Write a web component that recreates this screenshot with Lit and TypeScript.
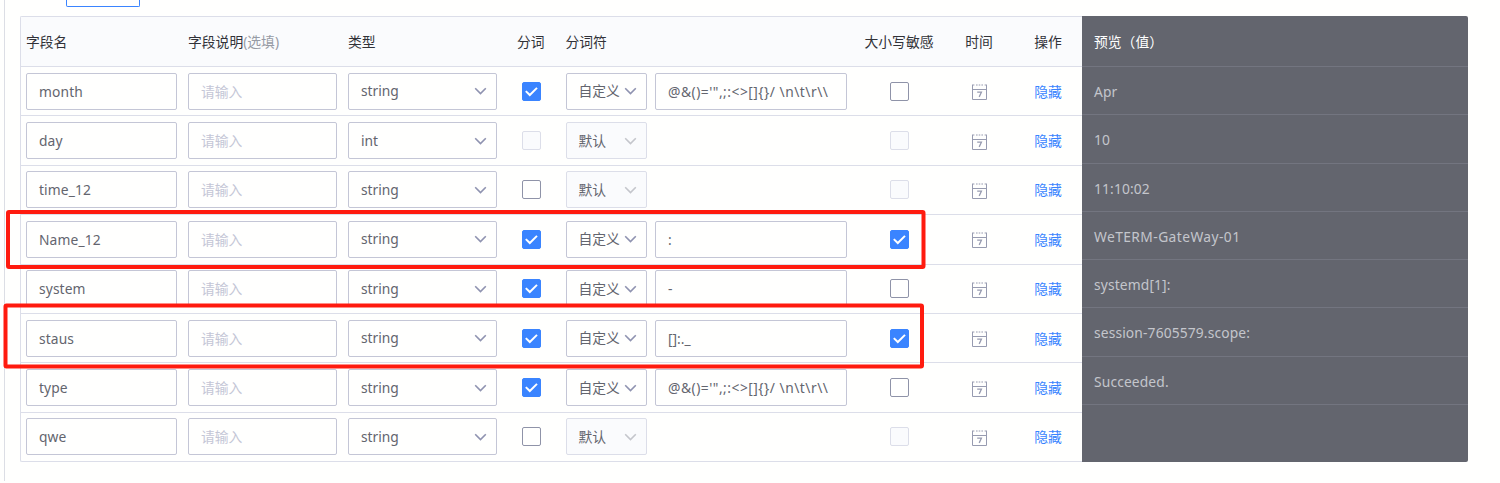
import { LitElement, html, css, svg } from "lit";
import { customElement, property } from "lit/decorators.js";
import { classMap } from "lit/directives/class-map.js";

type Check = "on" | "off" | "disabled";

interface Field {
  name: string;
  type: string;
  split: Check;
  mode: string;
  chars?: string;
  sensitive: Check;
}

const DEFAULT_CHARS = `@&()='",;:<>[]{}/ \\n\\t\\r\\\\`;

const FIELDS: Field[] = [
  { name: "month", type: "string", split: "on", mode: "自定义", chars: DEFAULT_CHARS, sensitive: "off" },
  { name: "day", type: "int", split: "disabled", mode: "默认", sensitive: "disabled" },
  { name: "time_12", type: "string", split: "off", mode: "默认", sensitive: "disabled" },
  { name: "Name_12", type: "string", split: "on", mode: "自定义", chars: ":", sensitive: "on" },
  { name: "system", type: "string", split: "on", mode: "自定义", chars: "-", sensitive: "off" },
  { name: "staus", type: "string", split: "on", mode: "自定义", chars: "[]:._", sensitive: "on" },
  { name: "type", type: "string", split: "on", mode: "自定义", chars: DEFAULT_CHARS, sensitive: "off" },
  { name: "qwe", type: "string", split: "off", mode: "默认", sensitive: "disabled" },
];

const PREVIEW = ["Apr", "10", "11:10:02", "WeTERM-GateWay-01", "systemd[1]:", "session-7605579.scope:", "Succeeded.", ""];

@customElement("check-box")
export class CheckBox extends LitElement {
  @property() state: Check = "off";
  static styles = css`
    :host { display: block; width: 19px; height: 19px; }
    .box { box-sizing: border-box; width: 19px; height: 19px; border: 1px solid #8f93a8; border-radius: 2px; background: #fffffe; }
    .on { background: #3a84ff; border-color: #3a84ff; }
    .disabled { background: #fafbfd; border-color: #dcdee9; }
    svg { display: block; width: 17px; height: 17px; }
    path { fill: none; stroke: #fff; stroke-width: 2; }
  `;
  render() {
    return html`<div class=${classMap({ box: true, on: this.state === "on", disabled: this.state === "disabled" })}>
      ${this.state === "on" ? html`<svg viewBox="0 0 17 17"><path d="M2.8 8.1 6.8 12 14 4.9" /></svg>` : ""}
    </div>`;
  }
}

@customElement("drop-down")
export class DropDown extends LitElement {
  @property() label = "";
  @property({ type: Boolean }) disabled = false;
  static styles = css`
    :host { display: block; }
    .box { box-sizing: border-box; height: 37px; display: flex; align-items: center; justify-content: space-between; padding: 0 9px 0 12px; border: 1px solid #c4c6d6; border-radius: 2px; background: #fffffe; color: #63656e; white-space: nowrap; }
    .disabled { background: #fafbfd; border-color: #dcdee9; }
    svg { flex: none; width: 13px; height: 8px; }
    path { fill: none; stroke: #8f93b0; stroke-width: 1.6; }
    .disabled path { stroke: #c4c6cc; }
  `;
  render() {
    return html`<div class=${classMap({ box: true, disabled: this.disabled })}>
      <span>${this.label}</span>
      <svg viewBox="0 0 13 8"><path d="M1.2 1.2 6.5 6.6 11.8 1.2" /></svg>
    </div>`;
  }
}

const calendar = svg`<svg class="cal" viewBox="0 0 15 16">
  <path d="M.5 1V15.5H14.5V1 M.5 5.5H14.5" />
  <path d="M0 1H2.4 M4 1H5.6 M6.7 1H8.3 M9.4 1H11 M12.6 1H15" />
  <path class="seven" d="M5.2 8.2H9.4L7.2 12.9" />
</svg>`;

@customElement("app-root")
export class AppRoot extends LitElement {
  static styles = css`
    :host { display: block; position: relative; width: 1500px; height: 483px; overflow: hidden; background: #fffffe; color: #63656e; font: 13.8px/20px "Noto Sans", "Noto Sans CJK SC", sans-serif; }
    .page { box-sizing: border-box; height: 481px; margin-left: 4px; border-left: 1px solid #dcdee5; display: flex; flex-direction: column; }
    .stub { box-sizing: border-box; width: 74px; height: 7px; margin-left: 61px; border: 1px solid #3a84ff; border-top: 0; border-radius: 0 0 2px 2px; }
    .panel { display: flex; margin: 9px 0 0 15px; height: 446px; }
    .table { box-sizing: border-box; width: 1062px; border: 1px solid #dcdee9; border-right: 0; border-radius: 2px 0 0 2px; }
    .row { box-sizing: border-box; display: grid; grid-template-columns: 162px 160px 160px 57.5px 89.5px 192px 104px 56px 82px; height: 49.4px; padding-left: 5px; align-items: center; border-top: 1px solid #dcdee9; }
    .head { height: 49px; border-top: 0; background: #fafbfd; color: #313238; white-space: nowrap; }
    .opt { color: #979ba5; }
    .input { box-sizing: border-box; height: 37px; padding: 0 12px; line-height: 36px; border: 1px solid #c4c6d6; border-radius: 2px; white-space: pre; }
    .name { width: 151px; letter-spacing: .12px; }
    .desc { width: 149px; color: #c4c6d6; }
    .kind { width: 149px; }
    .mode { width: 81px; }
    .long { letter-spacing: .5px; }
    .mid { display: flex; justify-content: center; }
    .split { padding-left: 14px; }
    .split-title { padding-left: 9px; }
    .link { color: #3a84ff; padding-top: 1px; }
    .cal { width: 15px; height: 16px; margin-top: 2px; }
    .cal path { fill: none; stroke: #979bb0; stroke-width: 1; }
    .cal .seven { stroke-width: 1.3; }
    .preview { box-sizing: border-box; width: 386px; background: #63656e; color: #c4c6cc; border-radius: 0 2px 2px 0; }
    .line { box-sizing: border-box; height: 48.3px; padding-left: 12px; line-height: 49px; letter-spacing: .14px; border-top: 1px solid #737580; }
    .host { letter-spacing: .42px; }
    .title { height: 50px; line-height: 52px; padding-left: 12px; color: #fff; }
    .marks { position: absolute; left: 0; top: 0; width: 1500px; height: 483px; pointer-events: none; }
    .marks rect { fill: none; stroke: #ff1b0f; stroke-width: 4; }
  `;

  private row(f: Field) {
    return html`<div class="row">
      <div class="input name">${f.name}</div>
      <div class="input desc">请输入</div>
      <drop-down class="kind" label=${f.type}></drop-down>
      <div class="split"><check-box state=${f.split}></check-box></div>
      <drop-down class="mode" label=${f.mode} ?disabled=${!f.chars}></drop-down>
      ${f.chars ? html`<div class=${classMap({ input: true, long: f.chars === DEFAULT_CHARS })}>${f.chars}</div>` : html`<div></div>`}
      <div class="mid"><check-box state=${f.sensitive}></check-box></div>
      <div class="mid">${calendar}</div>
      <div class="mid link">隐藏</div>
    </div>`;
  }

  render() {
    return html`
      <div class="page">
        <div class="stub"></div>
        <div class="panel">
          <div class="table">
            <div class="row head">
              <div>字段名</div>
              <div>字段说明<span class="opt">(选填)</span></div>
              <div>类型</div>
              <div class="split-title">分词</div>
              <div>分词符</div>
              <div></div>
              <div class="mid">大小写敏感</div>
              <div class="mid">时间</div>
              <div class="mid">操作</div>
            </div>
            ${FIELDS.map((f) => this.row(f))}
          </div>
          <div class="preview">
            <div class="title">预览（值）</div>
            ${PREVIEW.map((p) => html`<div class=${classMap({ line: true, host: p.startsWith("WeTERM") })}>${p}</div>`)}
          </div>
        </div>
      </div>
      <svg class="marks" viewBox="0 0 1500 483">
        <rect x="8" y="212" width="915.5" height="55" rx="1" />
        <rect x="5.5" y="305.5" width="916.5" height="61" rx="1" />
      </svg>
    `;
  }
}
